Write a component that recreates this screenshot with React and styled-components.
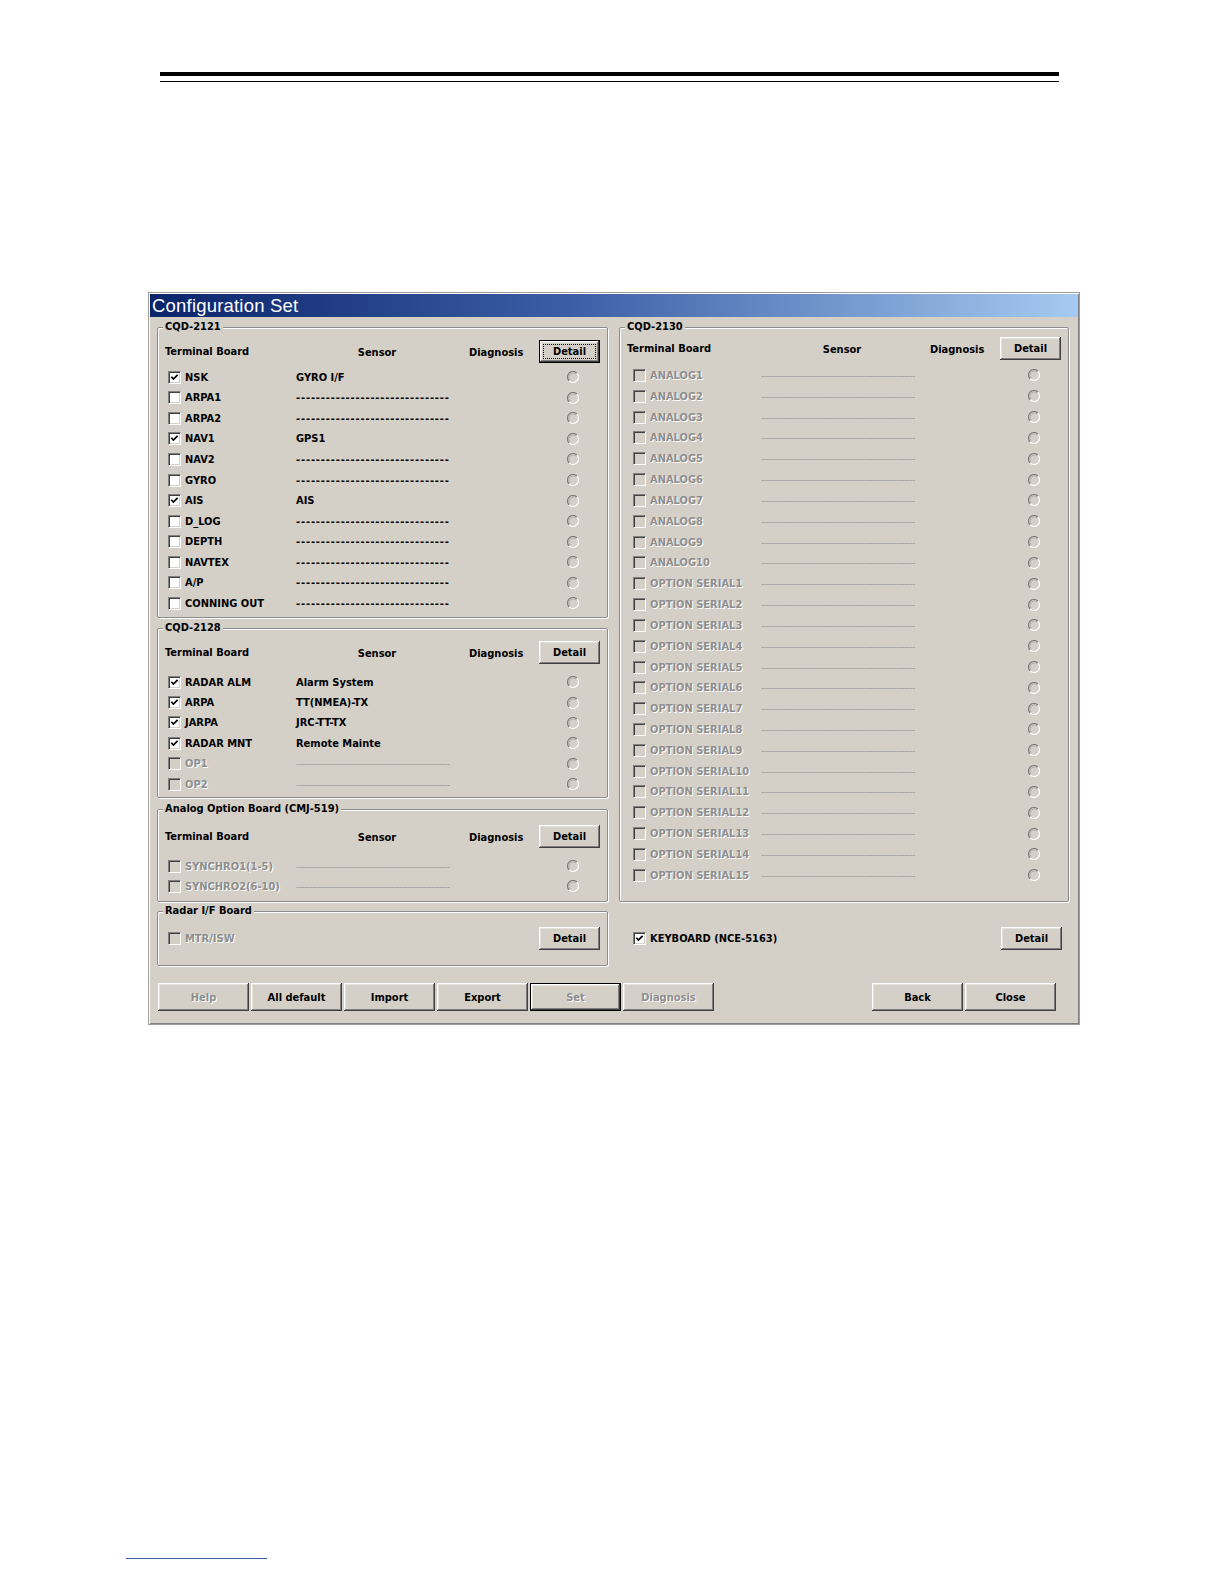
import React from 'react';
import styled, { createGlobalStyle } from 'styled-components';

const GlobalStyle = createGlobalStyle`
  * { box-sizing: border-box; }
  html, body {
    margin: 0;
    overflow: hidden;
    background: #fff;
  }
`;

const FONT = '"DejaVu Sans Condensed", "Liberation Sans", Arial, sans-serif';

const Page = styled.div`
  width: 1224px;
  height: 1584px;
  overflow: hidden;
  padding-top: 72px;
  background: #fff;
  font-family: ${FONT};
`;

const ThickRule = styled.div`
  margin-left: 160px;
  width: 899px;
  height: 4px;
  background: #000;
`;

const ThinRule = styled.div`
  margin: 5px 0 0 160px;
  width: 899px;
  height: 1px;
  background: #000;
`;

const FootRule = styled.div`
  margin: 533px 0 0 126px;
  width: 141px;
  height: 1px;
  background: #3b5aa8;
`;

const Dialog = styled.div`
  margin: 210px 0 0 148px;
  width: 932px;
  height: 733px;
  padding: 1px;
  display: flex;
  flex-direction: column;
  background: #d4d0c8;
  border: 1px solid #9c9c9c;
  box-shadow: inset 1px 1px 0 #fff, inset -1px -1px 0 #808080;
`;

const TitleBar = styled.div`
  height: 23px;
  padding-left: 2px;
  display: flex;
  align-items: center;
  background: linear-gradient(90deg, #0a246a 0%, #3c5da6 45%, #a6caf0 100%);
  color: #fff;
  font-family: "Liberation Sans", Arial, sans-serif;
  font-size: 18.5px;
  letter-spacing: 0.2px;
`;

const Body = styled.div`
  flex: 1;
  padding: 10px 9px 12px 7px;
  display: flex;
  flex-direction: column;
`;

const Columns = styled.div`
  display: grid;
  grid-template-columns: 451px 450px;
  column-gap: 11px;
  align-items: start;
`;

const Column = styled.div`
  display: flex;
  flex-direction: column;
`;

const Group = styled.div`
  position: relative;
  height: ${(p) => p.$h}px;
  margin-top: ${(p) => p.$mt || 0}px;
  padding-top: ${(p) => p.$pt || 0}px;
  border: 1px solid #8c8c8c;
  border-radius: 2px;
  box-shadow: inset 1px 1px 0 #fff, 1px 1px 0 #fff;
`;

const InlineGroup = styled(Group)`
  display: flex;
  align-items: center;
  justify-content: space-between;
  padding: 0 7px 0 10px;
`;

const Legend = styled.span`
  position: absolute;
  top: -8px;
  left: 5px;
  padding: 0 2px;
  line-height: 14px;
  background: #d4d0c8;
  font-size: 11px;
  font-weight: bold;
  color: #000;
`;

const Header = styled.div`
  display: flex;
  align-items: center;
  height: 23px;
  padding: 0 7px;
  margin-bottom: ${(p) => p.$mb}px;
  font-size: 11px;
  font-weight: bold;
  color: #000;
`;

const HeadCell = styled.span`
  flex: none;
  width: ${(p) => (p.$w ? `${p.$w}px` : 'auto')};
  margin-left: ${(p) => p.$ml || 0}px;
  margin-top: ${(p) => p.$dy || 0}px;
  text-align: ${(p) => (p.$center ? 'center' : 'left')};
`;

const Row = styled.div`
  display: flex;
  align-items: center;
  height: ${(p) => p.$h}px;
  padding: 0 ${(p) => p.$pr}px 0 ${(p) => p.$pl}px;
`;

const CheckCell = styled.label`
  flex: none;
  width: ${(p) => (p.$w ? `${p.$w}px` : 'auto')};
  display: flex;
  align-items: center;
  gap: 4px;
  white-space: nowrap;
`;

const Box = styled.span`
  flex: none;
  width: 13px;
  height: 13px;
  display: flex;
  align-items: center;
  justify-content: center;
  background: ${(p) => (p.$off ? '#d4d0c8' : '#fff')};
  border-top: 1px solid #808080;
  border-left: 1px solid #808080;
  border-bottom: 1px solid #fff;
  border-right: 1px solid #fff;
  box-shadow: inset 1px 1px 0 #404040, inset -1px -1px 0 #d4d0c8;
`;

const Text = styled.span`
  font-size: 11px;
  font-weight: bold;
  color: ${(p) => (p.$off ? '#8e8e8e' : '#000')};
  text-shadow: ${(p) => (p.$off ? '1px 1px 0 #fff' : 'none')};
`;

const Sensor = styled.span`
  flex: none;
  width: 162px;
  white-space: nowrap;
  font-size: ${(p) => (p.$off ? '10px' : '11px')};
  font-weight: ${(p) => (p.$off ? 'normal' : 'bold')};
  letter-spacing: ${(p) => (p.$dash ? (p.$off ? '-0.6px' : '0.85px') : '0')};
  color: ${(p) => (p.$off ? '#a3a3a3' : '#000')};
`;

const RadioWrap = styled.span`
  margin-left: auto;
  width: 12px;
  height: 12px;
  display: flex;
`;

const Btn = styled.button`
  flex: none;
  width: ${(p) => p.$w || 91}px;
  height: ${(p) => p.$h || 28}px;
  padding: 0;
  background: #d4d0c8;
  border: ${(p) => (p.$default || p.$focus ? '1px solid #000' : 'none')};
  box-shadow: inset -1px -1px 0 #404040, inset 1px 1px 0 #fff,
    inset -2px -2px 0 #808080, inset 2px 2px 0 #e4e2dc;
  font-family: ${FONT};
  font-size: 11px;
  font-weight: bold;
  color: ${(p) => (p.disabled ? '#8e8e8e' : '#000')};
  text-shadow: ${(p) => (p.disabled ? '1px 1px 0 #fff' : 'none')};
  outline: ${(p) => (p.$focus ? '1px dotted #000' : 'none')};
  outline-offset: -5px;
  cursor: default;
`;

const Plain = styled.div`
  height: ${(p) => p.$h}px;
  margin-top: ${(p) => p.$mt || 0}px;
  display: flex;
  align-items: center;
  justify-content: space-between;
  padding: 0 7px 0 14px;
`;

const ButtonBar = styled.div`
  margin-top: 17px;
  height: 28px;
  padding: 0 13px 0 1px;
  display: flex;
  gap: 2px;
`;

const Spacer = styled.div`
  flex: 1;
`;

const DASHES = '-'.repeat(31);
const THIN_DASHES = '-'.repeat(58);

const CheckMark = ({ off }) => (
  <svg width="9" height="9" viewBox="0 0 9 9">
    <polyline
      points="1.3,3.8 3.4,6.1 7.6,1.8"
      fill="none"
      stroke={off ? '#808080' : '#000'}
      strokeWidth="1.7"
    />
  </svg>
);

const Check = ({ checked, off }) => (
  <Box $off={off}>{checked && <CheckMark off={off} />}</Box>
);

const Radio = () => (
  <RadioWrap>
    <svg width="12" height="12" viewBox="0 0 12 12">
      <path d="M9.9 2.1 A5.5 5.5 0 0 0 2.1 9.9" fill="none" stroke="#7c7c7c" strokeWidth="1.2" />
      <path d="M9.1 2.9 A4.4 4.4 0 0 0 2.9 9.1" fill="none" stroke="#a9a79f" strokeWidth="0.9" />
      <path d="M2.1 9.9 A5.5 5.5 0 0 0 9.9 2.1" fill="none" stroke="#fff" strokeWidth="1.2" />
    </svg>
  </RadioWrap>
);

const GroupHeader = ({ ckLeft, diagGap, mb, focus }) => (
  <Header $mb={mb}>
    <HeadCell $w={ckLeft + 128 - 8}>Terminal Board</HeadCell>
    <HeadCell $w={162} $center $dy={2}>Sensor</HeadCell>
    <HeadCell $ml={diagGap} $dy={1}>Diagnosis</HeadCell>
    <Spacer />
    <Btn $w={61} $h={23} $focus={focus}>Detail</Btn>
  </Header>
);

const SensorRow = ({ item, ckLeft, rowH }) => (
  <Row $h={rowH} $pl={ckLeft - 1} $pr={28}>
    <CheckCell $w={128}>
      <Check checked={item.on} off={item.off} />
      <Text $off={item.off}>{item.name}</Text>
    </CheckCell>
    <Sensor $off={item.off} $dash={!item.sensor}>
      {item.sensor || (item.off ? THIN_DASHES : DASHES)}
    </Sensor>
    <Radio />
  </Row>
);

const cqd2121 = [
  { name: 'NSK', on: true, sensor: 'GYRO I/F' },
  { name: 'ARPA1' },
  { name: 'ARPA2' },
  { name: 'NAV1', on: true, sensor: 'GPS1' },
  { name: 'NAV2' },
  { name: 'GYRO' },
  { name: 'AIS', on: true, sensor: 'AIS' },
  { name: 'D_LOG' },
  { name: 'DEPTH' },
  { name: 'NAVTEX' },
  { name: 'A/P' },
  { name: 'CONNING OUT' },
];

const cqd2128 = [
  { name: 'RADAR ALM', on: true, sensor: 'Alarm System' },
  { name: 'ARPA', on: true, sensor: 'TT(NMEA)-TX' },
  { name: 'JARPA', on: true, sensor: 'JRC-TT-TX' },
  { name: 'RADAR MNT', on: true, sensor: 'Remote Mainte' },
  { name: 'OP1', off: true },
  { name: 'OP2', off: true },
];

const cmj519 = [
  { name: 'SYNCHRO1(1-5)', off: true },
  { name: 'SYNCHRO2(6-10)', off: true },
];

const cqd2130 = [
  ...Array.from({ length: 10 }, (_, i) => ({ name: `ANALOG${i + 1}`, off: true })),
  ...Array.from({ length: 15 }, (_, i) => ({ name: `OPTION SERIAL${i + 1}`, off: true })),
];

const App = () => (
  <Page>
    <GlobalStyle />
    <ThickRule />
    <ThinRule />
    <Dialog>
      <TitleBar>Configuration Set</TitleBar>
      <Body>
        <Columns>
          <Column>
            <Group $h={291} $pt={12}>
              <Legend>CQD-2121</Legend>
              <GroupHeader ckLeft={11} diagGap={11} mb={4} focus />
              {cqd2121.map((item) => (
                <SensorRow key={item.name} item={item} ckLeft={11} rowH={20.55} />
              ))}
            </Group>
            <Group $h={170} $mt={10} $pt={12}>
              <Legend>CQD-2128</Legend>
              <GroupHeader ckLeft={11} diagGap={11} mb={8} />
              {cqd2128.map((item) => (
                <SensorRow key={item.name} item={item} ckLeft={11} rowH={20.4} />
              ))}
            </Group>
            <Group $h={93} $mt={11} $pt={15}>
              <Legend>Analog Option Board (CMJ-519)</Legend>
              <GroupHeader ckLeft={11} diagGap={11} mb={8} />
              {cmj519.map((item) => (
                <SensorRow key={item.name} item={item} ckLeft={11} rowH={20} />
              ))}
            </Group>
            <InlineGroup $h={55} $mt={9}>
              <Legend>Radar I/F Board</Legend>
              <CheckCell>
                <Check off />
                <Text $off>MTR/ISW</Text>
              </CheckCell>
              <Btn $w={61} $h={23}>Detail</Btn>
            </InlineGroup>
          </Column>
          <Column>
            <Group $h={575} $pt={9}>
              <Legend>CQD-2130</Legend>
              <GroupHeader ckLeft={14} diagGap={7} mb={5} />
              {cqd2130.map((item) => (
                <SensorRow key={item.name} item={item} ckLeft={14} rowH={20.83} />
              ))}
            </Group>
            <Plain $h={55} $mt={9}>
              <CheckCell>
                <Check checked />
                <Text>KEYBOARD (NCE-5163)</Text>
              </CheckCell>
              <Btn $w={61} $h={23}>Detail</Btn>
            </Plain>
          </Column>
        </Columns>
        <ButtonBar>
          <Btn disabled>Help</Btn>
          <Btn>All default</Btn>
          <Btn>Import</Btn>
          <Btn>Export</Btn>
          <Btn disabled $default>Set</Btn>
          <Btn disabled>Diagnosis</Btn>
          <Spacer />
          <Btn>Back</Btn>
          <Btn>Close</Btn>
        </ButtonBar>
      </Body>
    </Dialog>
    <FootRule />
  </Page>
);

export default App;
